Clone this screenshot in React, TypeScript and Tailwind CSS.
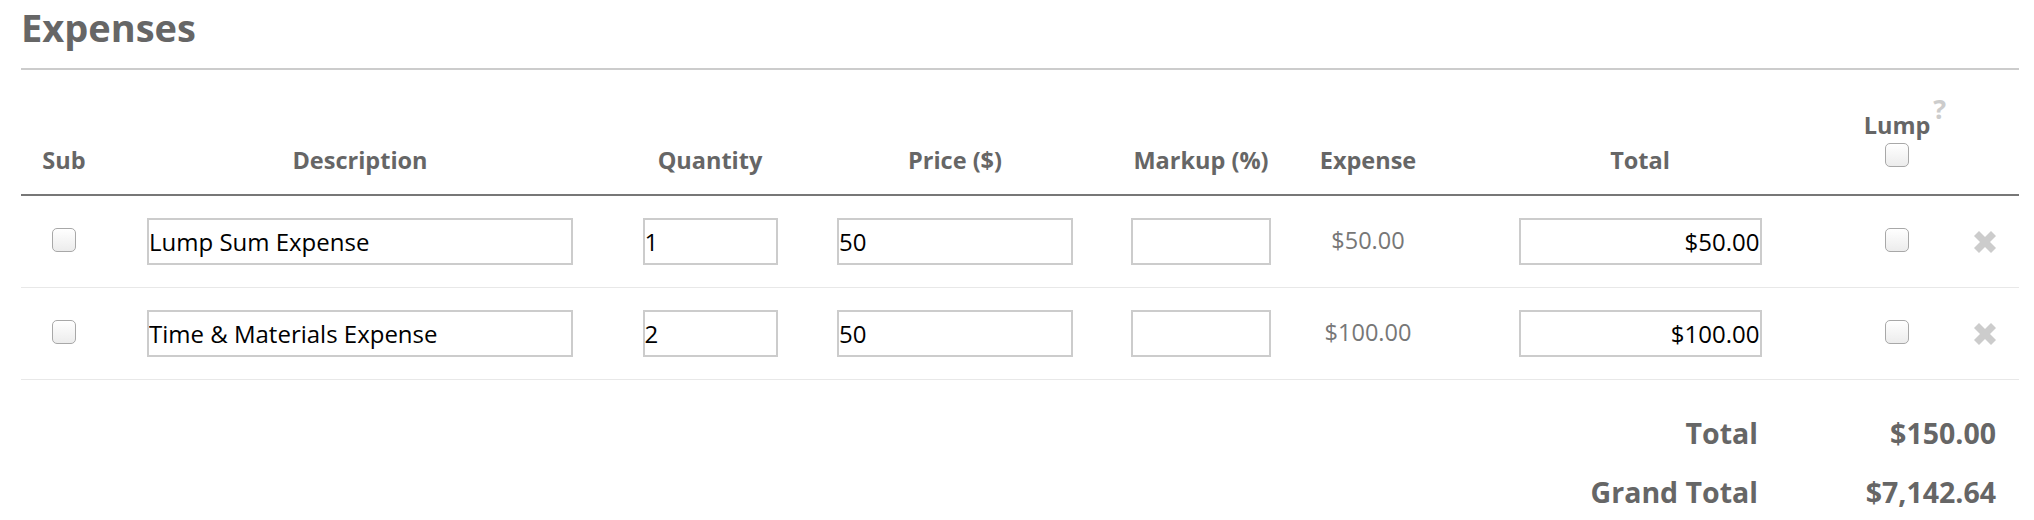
import React from 'react';

interface ExpenseRow {
    id: number;
    description: string;
    quantity: string;
    price: string;
    markup: string;
    expense: string;
    total: string;
}

const rows: ExpenseRow[] = [
    { id: 1, description: 'Lump Sum Expense', quantity: '1', price: '50', markup: '', expense: '$50.00', total: '$50.00' },
    { id: 2, description: 'Time & Materials Expense', quantity: '2', price: '50', markup: '', expense: '$100.00', total: '$100.00' },
];

const cols = 'grid grid-cols-[86px_506px_194px_296px_196px_138px_406px_108px_68px]';
const inputBase = 'h-[47px] border-2 border-[#ccc] bg-white px-0 text-[24px] text-black outline-none font-[\'Open_Sans\',sans-serif]';

const Check: React.FC<{ className?: string }> = ({ className = '' }) => (
    <input
        type="checkbox"
        className={`appearance-none block w-[24px] h-[24px] rounded-[5px] border border-[#a8a8a8] bg-linear-to-b from-white to-[#ececec] shadow-[inset_0_1px_0_rgba(255,255,255,0.9)] ${className}`}
    />
);

const RemoveIcon: React.FC = () => (
    <svg width="24" height="24" viewBox="0 0 24 24" className="block">
        <line x1="3.5" y1="3.5" x2="20.5" y2="20.5" stroke="#cccccc" strokeWidth="7" />
        <line x1="20.5" y1="3.5" x2="3.5" y2="20.5" stroke="#cccccc" strokeWidth="7" />
    </svg>
);

const HeaderCell: React.FC<{ children: React.ReactNode }> = ({ children }) => (
    <div className="flex items-end justify-center pb-[19px] text-[23.5px] leading-[30px] font-bold text-[#666]">
        {children}
    </div>
);

export default function App() {
    return (
        <div className="w-[2034px] h-[520px] bg-white pl-[21px] pr-[15px] pt-[3px] font-['Open_Sans',sans-serif]">
            <h2 className="text-[38px] leading-[48px] font-bold text-[#666]">Expenses</h2>
            <div className="mt-[17px] h-[2px] bg-[#ccc]" />

            {/* header */}
            <div className={`${cols} h-[126px] border-b-2 border-[#777]`}>
                <HeaderCell>Sub</HeaderCell>
                <HeaderCell>Description</HeaderCell>
                <HeaderCell>Quantity</HeaderCell>
                <HeaderCell>Price ($)</HeaderCell>
                <HeaderCell>Markup (%)</HeaderCell>
                <HeaderCell>Expense</HeaderCell>
                <HeaderCell>Total</HeaderCell>
                <div className="flex flex-col items-center justify-end pb-[17px] text-[23.5px] leading-[30px] font-bold text-[#666]">
                    <span className="relative">
                        Lump
                        <span className="absolute left-full top-[-15px] ml-[3px] text-[27px] leading-none font-bold text-[#ccc]">?</span>
                    </span>
                    <Check className="mt-[3px] mb-[10px]" />
                </div>
                <div />
            </div>

            {/* rows */}
            {rows.map(row => (
                <div key={row.id} className={`${cols} h-[92px] border-b border-[#e8e8e8]`}>
                    <div className="flex items-center justify-center pb-[4px]">
                        <Check />
                    </div>
                    <div className="flex items-center justify-center">
                        <input className={`${inputBase} w-[426px]`} defaultValue={row.description} />
                    </div>
                    <div className="flex items-center justify-center">
                        <input className={`${inputBase} w-[135px]`} defaultValue={row.quantity} />
                    </div>
                    <div className="flex items-center justify-center">
                        <input className={`${inputBase} w-[236px]`} defaultValue={row.price} />
                    </div>
                    <div className="flex items-center justify-center">
                        <input className={`${inputBase} w-[140px]`} defaultValue={row.markup} />
                    </div>
                    <div className="flex items-center justify-center pb-[4px] text-[23.5px] leading-[30px] text-[#777]">
                        {row.expense}
                    </div>
                    <div className="flex items-center justify-center">
                        <input className={`${inputBase} w-[243px] text-right`} defaultValue={row.total} />
                    </div>
                    <div className="flex items-center justify-center pb-[4px]">
                        <Check />
                    </div>
                    <div className="flex items-center justify-center">
                        <RemoveIcon />
                    </div>
                </div>
            ))}

            {/* totals */}
            <div className="pt-[24px] pr-[23px] text-[28.5px] font-bold text-[#666]">
                <div className="flex justify-end h-[59px] leading-[59px]">
                    <span className="text-right">Total</span>
                    <span className="w-[238px] text-right">$150.00</span>
                </div>
                <div className="flex justify-end h-[59px] leading-[59px]">
                    <span className="text-right">Grand Total</span>
                    <span className="w-[238px] text-right">$7,142.64</span>
                </div>
            </div>
        </div>
    );
}
